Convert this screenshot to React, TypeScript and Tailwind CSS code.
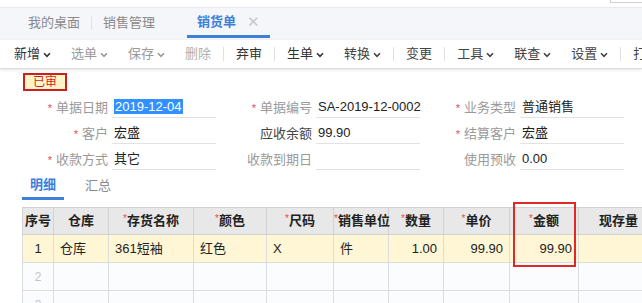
const font = { fontFamily: '"Liberation Sans", "Noto Sans CJK SC", sans-serif' };

function Chevron({ color }: { color: string }) {
  return (
    <svg width="8" height="6" viewBox="0 0 8 6" className="ml-[3px] mt-[1px]">
      <path d="M1 1.2 L4 4.4 L7 1.2" fill="none" stroke={color} strokeWidth="1.6" />
    </svg>
  );
}

type Tool = { label: string; drop?: boolean; color: string } | "sep";

const tools: Tool[] = [
  { label: "新增", drop: true, color: "#333" },
  { label: "选单", drop: true, color: "#9a9a9a" },
  { label: "保存", drop: true, color: "#9a9a9a" },
  { label: "删除", color: "#b0b0b0" },
  "sep",
  { label: "弃审", color: "#333" },
  "sep",
  { label: "生单", drop: true, color: "#333" },
  { label: "转换", drop: true, color: "#444" },
  "sep",
  { label: "变更", color: "#444" },
  "sep",
  { label: "工具", drop: true, color: "#444" },
  { label: "联查", drop: true, color: "#444" },
  { label: "设置", drop: true, color: "#444" },
  "sep",
  { label: "打印", color: "#444" },
];

type Field = { label: string; req?: boolean; value?: string; dark?: boolean; sel?: boolean };

const rows: Field[][] = [
  [
    { label: "单据日期", req: true, value: "2019-12-04", sel: true },
    { label: "单据编号", req: true, value: "SA-2019-12-0002" },
    { label: "业务类型", req: true, value: "普通销售" },
  ],
  [
    { label: "客户", req: true, value: "宏盛" },
    { label: "应收余额", value: "99.90", dark: true },
    { label: "结算客户", req: true, value: "宏盛" },
  ],
  [
    { label: "收款方式", req: true, value: "其它" },
    { label: "收款到期日" },
    { label: "使用预收", value: "0.00" },
  ],
];

const cols = [
  { t: "序号", w: 31 },
  { t: "仓库", w: 55 },
  { t: "存货名称", w: 85, req: true },
  { t: "颜色", w: 73, req: true },
  { t: "尺码", w: 67, req: true },
  { t: "销售单位", w: 55, req: true },
  { t: "数量", w: 55, req: true },
  { t: "单价", w: 66, req: true },
  { t: "金额", w: 69, req: true },
  { t: "现存量", w: 80 },
];

const row1: { v: string; align: "left" | "right" | "center" }[] = [
  { v: "1", align: "center" },
  { v: "仓库", align: "left" },
  { v: "361短袖", align: "left" },
  { v: "红色", align: "left" },
  { v: "X", align: "left" },
  { v: "件", align: "left" },
  { v: "1.00", align: "right" },
  { v: "99.90", align: "right" },
  { v: "99.90", align: "right" },
  { v: "", align: "left" },
];

export default function App() {
  return (
    <div className="relative w-[642px] h-[303px] overflow-hidden bg-white text-[13px]" style={font}>
      {/* top strip */}
      <div className="relative h-[8px] bg-white border-b border-[#e6e9ef]">
        <div className="absolute right-[-2px] top-[-10px] w-[34px] h-[13px] border border-[#d0d0d0] bg-white" />
      </div>

      {/* page tabs */}
      <div className="h-[32px] bg-[#f4f6fa] flex items-start pl-[28px]">
        <div className="h-[29px] flex items-center text-[#8a8a8a]">我的桌面</div>
        <div className="h-[29px] flex items-center mx-[11px]">
          <div className="w-px h-[14px] bg-[#dfe2e8]" />
        </div>
        <div className="h-[29px] flex items-center text-[#8a8a8a]">销售管理</div>
        <div className="ml-[32px] h-[30px] px-[10px] flex items-center border-b-[3px] border-[#3d7fd9] text-[#3d7fd9] font-bold">
          销货单
          <span className="ml-[11px] text-[#c4c8cf] font-normal text-[15px] leading-none">✕</span>
        </div>
      </div>

      {/* toolbar */}
      <div className="relative h-[29px] flex items-center pl-[4px] border-b border-[#dedede] shadow-[0_1px_3px_rgba(0,0,0,0.12)] whitespace-nowrap">
        {tools.map((t, i) =>
          t === "sep" ? (
            <div key={i} className="w-px h-[14px] bg-[#e0e0e0] mx-[2px] shrink-0" />
          ) : (
            <div key={i} className="flex items-center px-[10px] shrink-0" style={{ color: t.color }}>
              {t.label}
              {t.drop && <Chevron color={t.color} />}
            </div>
          )
        )}
      </div>

      {/* status badge */}
      <div className="ml-[23px] mt-[4px] w-[44px] h-[18px] border-2 border-[#cc1f1f] bg-[#fff4c8] text-[#cc1f1f] text-[12px] leading-[14px] flex items-center justify-center">
        已审
      </div>

      {/* header form */}
      <div className="ml-[12px] mt-[1px]">
        {rows.map((r, ri) => (
          <div key={ri} className="grid grid-cols-[204px_204px_204px] h-[26px]">
            {r.map((f, fi) => (
              <div key={fi} className="flex items-end">
                <div className={`flex-1 h-[20px] leading-[20px] text-right pr-[4px] whitespace-nowrap ${f.dark ? "text-[#444]" : "text-[#9a9a9a]"}`}>
                  {f.req && <span className="text-[#e55050] text-[11px] mr-[4px]">*</span>}
                  {f.label}
                </div>
                <div className="w-[104px] h-[21px] leading-[20px] border-b border-[#e2e2e2] pl-[2px] text-[#222] whitespace-nowrap">
                  {f.sel ? (
                    <span className="bg-[#3390ff] text-white px-[1px]">{f.value}</span>
                  ) : (
                    f.value
                  )}
                </div>
              </div>
            ))}
          </div>
        ))}
      </div>

      {/* detail tabs */}
      <div className="ml-[22px] mt-[2px] flex">
        <div className="h-[28px] px-[8px] flex items-center border-b-[3px] border-[#3d7fd9] text-[#3d7fd9] font-bold">明细</div>
        <div className="ml-[13px] h-[28px] px-[8px] flex items-center text-[#8a8a8a]">汇总</div>
      </div>

      {/* grid */}
      <table className="ml-[22px] mt-[7px] table-fixed border-collapse w-[636px]">
        <colgroup>
          {cols.map((c) => (
            <col key={c.t} style={{ width: c.w }} />
          ))}
        </colgroup>
        <thead>
          <tr className="h-[27px] bg-[#e8e8e8]">
            {cols.map((c) => (
              <th key={c.t} className="border border-[#d2d2d2] font-bold text-[#222] text-center p-0 whitespace-nowrap">
                {c.req && <span className="text-[#e55050] text-[10px] align-top font-normal">*</span>}
                {c.t}
              </th>
            ))}
          </tr>
        </thead>
        <tbody>
          <tr className="h-[28px] bg-[#fff6d6]">
            {row1.map((c, i) => (
              <td
                key={i}
                className={`border border-[#dcdcdc] text-[#222] px-[6px] whitespace-nowrap ${
                  c.align === "right" ? "text-right" : c.align === "center" ? "text-center" : "text-left"
                }`}
              >
                {c.v}
              </td>
            ))}
          </tr>
          {["2", "3"].map((n) => (
            <tr key={n} className="h-[28px] bg-[#fbfcfd]">
              {cols.map((c, i) => (
                <td key={c.t} className="border border-[#dcdcdc] text-center text-[#c4c4c4] text-[12px] px-[6px]">
                  {i === 0 ? n : ""}
                </td>
              ))}
            </tr>
          ))}
        </tbody>
      </table>

      {/* annotation box around 金额 */}
      <div className="absolute left-[513px] top-[202px] w-[63px] h-[65px] border-2 border-[#e02828]" />
    </div>
  );
}
